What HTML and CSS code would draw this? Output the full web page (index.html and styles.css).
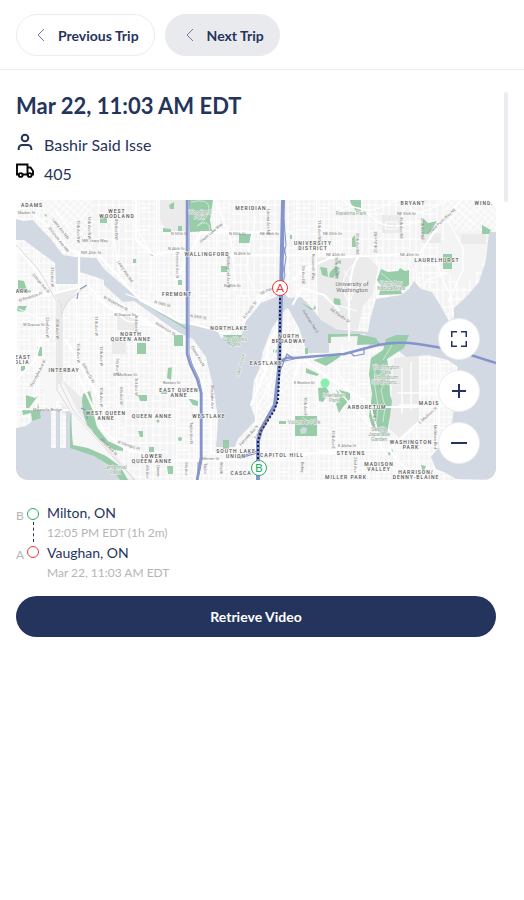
FILE: index.html
```html
<!DOCTYPE html>
<html lang="en">
<head>
<meta charset="utf-8">
<meta name="viewport" content="width=device-width, initial-scale=1">
<title>Trip details</title>
<link rel="stylesheet" href="styles.css">
</head>
<body>
<header class="trip-nav">
  <button class="pill" type="button">
    <svg class="chevron" viewBox="0 0 8 14" aria-hidden="true"><path d="M7 1 1 7l6 6"/></svg>
    <span>Previous Trip</span>
  </button>
  <button class="pill pill-filled" type="button">
    <svg class="chevron" viewBox="0 0 8 14" aria-hidden="true"><path d="M7 1 1 7l6 6"/></svg>
    <span>Next Trip</span>
  </button>
</header>
<div class="panel">
<main class="trip">
  <h1>Mar 22, 11:03 AM EDT</h1>
  <div class="facts">
    <div class="fact">
      <svg class="fact-icon" viewBox="0 0 18 18" fill="none" stroke="#25345d" stroke-width="2" aria-hidden="true"><circle cx="9" cy="5" r="3.300"/><path d="M2.700 17v-1.500a3.500 3.500 0 0 1 3.500-3.500h5.600a3.500 3.500 0 0 1 3.500 3.500V17"/></svg>
      <span>Bashir Said Isse</span>
    </div>
    <div class="fact">
      <svg class="fact-icon" viewBox="0 0 18 18" fill="none" stroke="#050505" stroke-width="1.900" aria-hidden="true"><path d="M3 12.500H1V2.500h10.500v10H6.500M11.500 5.500h3l2.500 3.500v3.500h-1"/><circle cx="4.700" cy="13" r="1.900"/><circle cx="13.700" cy="13" r="1.900"/></svg>
      <span>405</span>
    </div>
  </div>
  <section class="map" aria-label="Route map">
    <svg class="map-art" viewBox="0 0 480 280" preserveAspectRatio="xMidYMid slice">
      <defs>
        <pattern id="blocks" width="20" height="22" patternUnits="userSpaceOnUse"><path d="M3 0V22M8 0V22M13 0V22M18 0V22M0 4H20M0 12H20M0 19H20" stroke="#fff" stroke-width=".9"/><path d="M.5 0V22M0 8H13" stroke="#fff" stroke-width="1.300"/></pattern>
        <pattern id="wide" width="27" height="17" patternUnits="userSpaceOnUse"><path d="M2 0V17M9 0V17M16 0V17M22 0V17M0 5H27M0 14H16" stroke="#fff" stroke-width="1.100"/></pattern>
        <pattern id="slant" width="15" height="11" patternUnits="userSpaceOnUse" patternTransform="rotate(42)"><path d="M1 0V11M6 0V11M11 0V11M0 3H15M0 8H15" stroke="#fff"/></pattern>
      </defs>
      <rect width="480" height="280" fill="#f4f4f4"/>
      <rect width="480" height="280" fill="url(#blocks)"/>
      <path d="M215 0H275V95H215zM325 0H470V80L435 115L390 60H325zM75 0H122V95L64 52zM100 195H160V280H120z" fill="#f4f4f4"/>
      <path d="M215 0H275V95H215zM325 0H470V80L435 115L390 60H325zM75 0H122V95L64 52zM100 195H160V280H120z" fill="url(#wide)"/>
      <path d="M27 0H77V52L64 55L35 25zM248 140H276L273 185L245 230L240 195zM435 20H470V60L447 88L420 60zM422 0H480V31H440z" fill="#f4f4f4"/>
      <path d="M27 0H77V52L64 55L35 25zM248 140H276L273 185L245 230L240 195zM422 0H480V31H440z" fill="url(#slant)"/>

      <g fill="#ebebeb">
        <path d="M144 0H173V31H150l-6-12zM366 15H385V33H366zM320 57h32l10 10-5 27-10 12-5 24-30-2-10-10-1-60zM445 34h25v10h-25zM406 33h19v10h-19zM96 140h14v14H96zM101 115h20v15h-20zM403 155v65l-20 18-10-10 5-70zM36 95l10 14v105h24v-12L47 180v-70L63 88zM52 207l59 73h9L60 207z"/>
      </g>
      <path d="M42 128V200L54 211H62L46 180V128zM24 180l18-40v60l-10 8zM56 210V246L83 254 112 278 120 280 60 210z" fill="#f7f7f7"/>

      <g class="water">
        <path d="M0 19 7 21 17 20 24 28 34 38 47 55 59 57 80 58 88 69 110 88 122 98 160 123 188 126 202 132 205 138 225 137 230 121 245 103 260 97 265 91 273 98 285 97 294 106 305 120 320 129 352 132 354 120 360 99 385 95 393 89 398 81 405 89 416 92 424 105 433 121 438 118 438 108 451 96 463 82 470 60 473 32 480 32V280L440 279 430 273 420 269 415 257 423 247 435 233 438 207 437 180 442 167 432 160 412 155 390 157 377 146 350 147 320 153 291 153 287 140 283 128 272 108 267 112 256 128 247 151 243 170 238 180 235 207 240 220 222 239 219 247 200 247 202 220 198 190 190 157 177 139 160 131 118 101 107 102 88 85 88 80 77 76 63 72 62 84H40L39 63 20 49 8 40H0z"/>
        <path d="M0 228 10 226 20 218V210H35V248H40V211H44V248H50V211H56V246L83 255 101 268 111 280H0z"/>
      </g>
      <path d="M270 108 282 133 286 153H274L271 130 266 116zM313 134h36l4 11-6 15-34 2z" fill="#f5f5f5"/>
      <path d="M270 108 282 133 286 153H274L271 130 266 116zM320 145h25v15h-25z" fill="url(#wide)"/>
      <g fill="#99cda9">
        <path d="M173 0h24l-3 20 2 11-22 1zM84 17h7v6h-7zM223 34h12v9h-12zM205 66h6v6h-6zM153 5l5-3v7h-4zM147 28l8 1v3h-8zM117 59h3v4h-3zM134 54h4v2h-4zM162 26h4v5h-4zM162 80h4v5h-4zM274 35h2v4h-2z"/>
        <path d="m2 80 6 1 3 9 4 1v3H2zM2 106h9l-3 6-7-1zM28 14l3 1-1 2zM334 0h11v11h-5l-5-7zM407 18l5 5 9-2-8 13h-7zM466 25l9 5-2 4h-7zM427 54h9v15h-9zM365 69l7 3 10-1 2-3 5 3 4-1v15l-8 5 1 4-23 1 2-9-4-6zM336 38l3-3 1 12h-4z"/>
        <path d="m304 67 7 1 1 9-6-2zM314 72l5-5 5 1-7 10-4-1zM284 102l13 7 2-4 1 4-5 1zM320 72l4-1-3 9zM318 98l6 1 1 6-8 2zM119 98l41 25 11 7v-2l-50-31zM158 135h9v11h-9zM207 135h19l-1 7-8 5-8-6zM320 62l5-2v4zM312 134h32v2l-29 1v6h-3zM342 134l18 4 4 6-23 1zM121 143h9v11h-9zM21 147h5v9h-4zM5 166h4v5H5z"/>
        <path d="m66 200 1-6 7-3 2 8 1 13 4 15 6 8 5 6 15 7v3l-9-1-12-9-6-2-4-9-5-5-4-12zM54 212l3 33 15 3 18 8 14 10 8 14h-8l-11-15-15-9-24-8zM10 195l9 3 3-2-9 12 8 2 1-7 3 15-9 3-1-8-8 2-1-5 4-2z"/>
        <path d="m370 139 10-4h13l-5 13-17 11 2 10 1 26 2 6-2 15-3 18-14-3-4-15 3-22-3-20 2-16 12-8zM372 253l3-5 2 3-4 5zM279 216h22v20h-22zM297 160l27-7v4l-14 9zM290 168l13 6-2 2-11-3zM302 188l8-1 3 5-6 10-4-1zM320 189l14 4v6l-7 8-4 6-3-9 3-5zM263 221h7v3h-7zM289 148h3v6h-3zM207 240h6v9h-6zM172 198l10 3v5l-5-1zM405 265l5 1-3 7zM151 266h6v8h-5zM122 195h9v6h-7zM145 192h6v2h-6zM152 168l4-1-1 13-4-2zM122 231h5v6h-3zM133 247h5v5h-5z"/>
        <circle cx="164" cy="239" r="2"/><circle cx="142" cy="221" r="1.500"/><circle cx="259" cy="151" r="2"/>
      </g>
      <path d="m299 230 3-3 4 1-1 5-5 1z" transform="translate(-15 0)" fill="#d3d9e3"/>
      <g fill="none" stroke="#cde7d4"><path d="M175 2q18-4 18 6t-12 18q13-9 13 6M360 163q-3 17 0 30t1 25q-4 12 4 16M371 168v10l-6 12 4 17-2 15M376 145l-9 15M365 73l20 16M286 217l8 6 6-5"/></g>
      <g fill="none" stroke="#fff" stroke-linecap="round" stroke-linejoin="round">
        <path stroke-width="2.200" d="M0 46 26 78 43 105V130M14 12 33 27 54 50 62 53 80 52 124 100 160 120 200 130 208 134 225 129 233 110 250 94M63 53v33M0 93l36 1 35-9 21 22 68 27M120 0v40l18 15 28-5M160 80l25-48h90M171 55H320M278 80l9-10 27-12 90-5 18-27L445 0M345 55q-10 6-12 40v45M264 126l-12 18-1 23-16 38M277 104l9-16 22 7 15 15M240 218V280M0 209 54 210 115 276M62 175l26 57 25 18 20 5M50 140l40 70M0 180l19-20 6-20M160 198h35v55h125M285 160l-8 20v80M289 160l25 19 40 25 12 45M350 207h73v20M372 250l45-40M373 250l13 15 20 15M320 250h55M160 260h95l65-10"/>
        <path stroke-width="1.300" d="M40 12 54 28M80 12l34 6 18 30M95 18l8 55M135 55v36M110 94l37 14M73 93l38 28 49 10M105 104l50 32M327 0q20 17 43 5t25 2 35-7M321 13q20-13 35 4t52 2M432 20l15 28v22l-15 32M422 60q0 15 13 35l2 20M430 73l-19 7M386 168v45M395 162v48M404 158v50M413 158v50M425 162v45M403 182h34M382 193h55M383 205h52M320 170l44 70M320 188l40 45M235 2q8 18 0 35l-5 32 7 18M200 0l15 40 5 50M171 150l24 51M250 155q-5 15 3 30l-12 24M260 143l-8 55M271 143l-14 67"/>
        <path stroke-width="1" d="M337 65q-18 16-3 40M328 71q13 13 7 29M350 81l-15 12M320 105l21 6M370 22h11v7h-11zM445 3l12 11 8-8M437 6l20 18M6 120l30 10M3 109l39 18M58 115h40M70 94v100M88 97v90"/>
      </g>
      <path d="M0 45 22 69 41 102V190l12 19 65 71M43 100v84M45 103v83l12 24 62 70M69 87 51 102 45 115" fill="none" stroke="#dadada"/>
      <g fill="none" stroke="#8595cb" stroke-linejoin="round">
        <path stroke-width="2.500" d="M171 0V154L174 164 181 179 185 193V257L181 280"/>
        <path stroke-width="1" d="M173 0V154L176 164 183 179 186 193V260L182 280M182 262v12"/>
        <path stroke-width="4" d="M267 0 265 94 263 170 259 205 245 230 242 241V280"/>
        <path stroke-width="1" d="M268 20l2 25-4 17 3 13-4 15M268 47l2 10-2 15"/>
        <path stroke-width="2.500" d="M264 163q5-7 14-5l50-4 34-9q20-4 40-1l37 6 41 13"/>
        <path stroke-width="1.200" d="m264 171 7-17 7 5-14 3m76-11 8-3v6l-10 2-4-4zM221 258l20-7M224 258l17-5M62 93l-1 6M64 89l7-4M65 208l6 3v8"/>
      </g>
      <path class="route" d="M264 94V155L262 200 258 211 245 231 242 241V262"/>

      <g class="road-names">
        <text x="2" y="14">Market St</text><text x="66" y="42">NW Leary Way</text><text x="65" y="54">NW 45th St</text><text x="213" y="35">N 50th St</text><text x="244" y="35">NE 50th St</text><text x="218" y="55">N 45th St</text><text x="208" y="87">N 40th St</text><text x="307" y="35">NE 50th St</text><text x="310" y="56">NE 45th St</text><text x="381" y="15">NE 55th St</text><text x="384" y="56">NE 45th St</text><text x="97" y="176">W McGraw St</text><text x="98" y="116">W Dravus St</text><text x="7" y="126">W Dravus St</text><text x="17" y="211">Magnolia Bridge</text><text x="147" y="184">Boston St</text><text x="278" y="184">E Boston St</text><text x="322" y="247">E Aloha St</text><text x="186" y="260">Mercer St</text><text x="152" y="50">N 46th St</text><text x="155" y="35">N 50th St</text>
        <text transform="translate(36 20) rotate(52)">Leary Ave NW</text><text transform="translate(32 28) rotate(52)">Shilshole Ave NW</text><text transform="translate(16 75) rotate(49)">Gilman Ave W</text><text transform="translate(35 67) rotate(90)">31st Ave W</text><text transform="translate(61 20) rotate(90)">15th Ave NW</text><text transform="translate(72 16) rotate(90)">14th Ave NW</text><text transform="translate(99 19) rotate(90)">8th Ave NW</text><text transform="translate(101 62) rotate(56)">Leary Way NW</text><text transform="translate(87 98) rotate(28)">W Nickerson St</text><text transform="translate(138 103) rotate(15)">N 36th St</text><text transform="translate(139 124) rotate(31)">Nickerson St</text><text transform="translate(30 117) rotate(90)">22nd Ave W</text><text transform="translate(40 119) rotate(90)">20th Ave W</text><text transform="translate(79 116) rotate(90)">11th Ave W</text><text transform="translate(119 115) rotate(90)">3rd Ave W</text><text transform="translate(3 102) rotate(-18)">W Emerson Pl</text><text transform="translate(185 43) rotate(-40)">Green Lake Way</text><text transform="translate(160 52) rotate(90)">Fremont Ave N</text><text transform="translate(251 9) rotate(90)">Latona Ave NE</text><text transform="translate(211 56) rotate(90)">Wallingford Ave N</text><text transform="translate(302 20) rotate(90)">11th Ave NE</text><text transform="translate(319 57) rotate(90)">15th Ave NE</text><text transform="translate(286 65) rotate(90)">7th Ave NE</text><text transform="translate(296 54) rotate(90)">Roosevelt Way</text><text transform="translate(245 95) rotate(-25)">NE Pacific St</text><text transform="translate(314 110) rotate(35)">NE Pacific St</text><text transform="translate(229 119) rotate(-54)">N Pacific St</text><text transform="translate(174 117) rotate(9)">N 35th St</text><text transform="translate(286 111) rotate(57)">Fuhrman Ave E</text><text transform="translate(340 33) rotate(90)">20th Ave NE</text><text transform="translate(361 53) rotate(-90)">25th Ave NE</text><text transform="translate(384 17) rotate(90)">35th Ave NE</text><text transform="translate(405 18) rotate(90)">40th Ave NE</text><text transform="translate(415 33) rotate(-43)">Sand Point Way NE</text>
        <text transform="translate(61 143) rotate(90)">15th Ave W</text><text transform="translate(84 146) rotate(90)">12th Ave W</text><text transform="translate(66 164) rotate(62)">Gilman Dr W</text><text transform="translate(16 188) rotate(-63)">Thorndyke Ave W</text><text transform="translate(84 187) rotate(90)">10th Ave W</text><text transform="translate(100 158) rotate(90)">7th Ave W</text><text transform="translate(119 178) rotate(90)">3rd Ave W</text><text transform="translate(104 187) rotate(90)">6th Ave W</text><text transform="translate(84 240) rotate(45)">Elliott Ave W</text><text transform="translate(101 243) rotate(18)">W Olympic Pl</text><text transform="translate(130 265) rotate(90)">4th Ave</text><text transform="translate(141 265) rotate(90)">Queen</text><text transform="translate(175 147) rotate(60)">Dexter Ave N</text><text transform="translate(195 185) rotate(90)">Westlake Ave</text><text transform="translate(174 222) rotate(90)">Taylor Ave N</text><text transform="translate(169 262) rotate(90)">5th Ave</text><text transform="translate(188 263) rotate(90)">Taylor</text><text transform="translate(204 262) rotate(90)">Westlk</text><text transform="translate(225 246) rotate(-48)">Fairview Ave N</text><text transform="translate(240 239) rotate(-58)">Eastlake Ave E</text><text transform="translate(288 197) rotate(90)">10th Ave E</text><text transform="translate(285 262) rotate(90)">Brdwy</text><text transform="translate(316 230) rotate(90)">15th Ave E</text><text transform="translate(357 210) rotate(90)">24th Ave E</text><text transform="translate(338 257) rotate(90)">23rd Ave</text><text transform="translate(404 224) rotate(-42)">E Madison St</text><text transform="translate(418 225) rotate(90)">McGilvra Blvd</text>
      </g>
      <g class="places">
        <text x="16" y="7">ADAMS</text><text x="101" y="13">WEST</text><text x="101" y="18">WOODLAND</text><text x="235" y="10">MERIDIAN</text><text x="191" y="56">WALLINGFORD</text><text x="297" y="45">UNIVERSITY</text><text x="297" y="50">DISTRICT</text><text x="397" y="5">BRYANT</text><text x="468" y="5">WIND.</text><text x="421" y="62">LAURELHURST</text><text x="161" y="96">FREMONT</text><text x="213" y="130">NORTHLAKE</text><text x="273" y="138">NORTH</text><text x="273" y="143">BROADWAY</text><text x="115" y="136">NORTH</text><text x="115" y="141">QUEEN ANNE</text><text x="7" y="159">EAST</text><text x="6" y="164">OLIA</text><text x="48" y="172">INTERBAY</text><text x="90" y="215">WEST QUEEN</text><text x="90" y="220">ANNE</text><text x="136" y="218">QUEEN ANNE</text><text x="163" y="192">EAST QUEEN</text><text x="163" y="197">ANNE</text><text x="193" y="218">WESTLAKE</text><text x="136" y="258">LOWER</text><text x="136" y="263">QUEEN ANNE</text><text x="250" y="165">EASTLAKE</text><text x="220" y="253">SOUTH LAKE</text><text x="220" y="258">UNION</text><text x="266" y="257">CAPITOL HILL</text><text x="225" y="275">CASCA</text><text x="351" y="209">ARBORETUM</text><text x="413" y="205">MADIS</text><text x="335" y="255">STEVENS</text><text x="395" y="244">WASHINGTON</text><text x="395" y="249">PARK</text><text x="363" y="266">MADISON</text><text x="363" y="271">VALLEY</text><text x="330" y="279">MILLER PARK</text><text x="400" y="274">HARRISON/</text><text x="400" y="279">DENNY-BLAINE</text><text x="6" y="93">ARK</text>
      </g>
      <g class="parks"><text x="184" y="14">Woodland</text><text x="183" y="19">Park</text><text x="335" y="15">Ravenna Park</text><text x="375" y="85">Union Bay</text><text x="375" y="90">Natural Area</text><text x="370" y="169">Washington</text><text x="370" y="174">Park</text><text x="370" y="179">Arboretum</text><text x="370" y="184">UW Botanic…</text><text x="363" y="231">Seattle</text><text x="363" y="236">Japanese</text><text x="363" y="241">Garden</text><text x="99" y="269">Centennial</text><text x="99" y="274">Park</text><text x="288" y="224">Volunteer Park</text><text x="318" y="197">Interlaken</text><text x="318" y="202">Park</text><text x="219" y="141">Gas Works</text><text x="219" y="146">Park</text><text transform="translate(226 166) rotate(-75)">Lake Union</text></g>
      <g class="campus"><text x="336" y="86">University of</text><text x="336" y="92">Washington</text></g>
      <circle cx="309" cy="183" r="4.500" fill="#88f0ae"/>
      <g class="stop stop-start"><circle cx="264" cy="88" r="7.500"/><text x="264" y="92">A</text></g>
      <g class="stop stop-end"><circle cx="243" cy="268" r="7.500"/><text x="243" y="272">B</text></g>
    </svg>
    <div class="map-controls">
      <button type="button" aria-label="Full screen"><svg viewBox="0 0 18 18" aria-hidden="true"><path stroke-width="1.500" d="M1.750 7V1.750H7M11 1.750h5.250V7M16.250 11v5.250H11M7 16.250H1.750V11"/></svg></button>
      <button type="button" aria-label="Zoom in"><svg viewBox="0 0 18 18" aria-hidden="true"><path stroke-width="2" d="M9 2v14M2 9h14"/></svg></button>
      <button type="button" aria-label="Zoom out"><svg viewBox="0 0 18 18" aria-hidden="true"><path stroke-width="2" d="M1 9h16"/></svg></button>
    </div>
  </section>
  <ol class="stops">
    <li class="end">
      <span class="letter">B</span><span class="track"><i class="dot"></i><i class="link"></i></span>
      <div><p class="city">Milton, ON</p><p class="time">12:05 PM EDT (1h 2m)</p></div>
    </li>
    <li class="start">
      <span class="letter">A</span><span class="track"><i class="dot"></i></span>
      <div><p class="city">Vaughan, ON</p><p class="time">Mar 22, 11:03 AM EDT</p></div>
    </li>
  </ol>
  <button class="retrieve" type="button">Retrieve Video</button>
</main>
<div class="scroll-thumb"></div>
</div>
</body>
</html>
```
FILE: styles.css
```css
* { box-sizing: border-box; }
body {
  margin: 0;
  background: #fff;
  color: #25345d;
  font-family: Lato, "Liberation Sans", sans-serif;
}
h1, p, ol { margin: 0; padding: 0; }
button { font: inherit; color: inherit; cursor: pointer; }

.trip-nav {
  display: flex;
  gap: 10px;
  padding: 14px 16px 13px;
  border-bottom: 1px solid #ebecef;
}
.pill {
  display: flex;
  align-items: center;
  gap: 13px;
  height: 42px;
  padding: 0 15px 0 20px;
  border: 1px solid #ebecef;
  border-radius: 21px;
  background: #fff;
  font-size: 14px;
  font-weight: 700;
}
.pill-filled { background: #e9eaee; border-color: #e9eaee; }
.chevron { width: 8px; height: 14px; fill: none; stroke: #7078a0; stroke-width: 1; }

.panel { display: flex; gap: 8px; padding: 22px 16px 0; }
.trip { flex: 1; min-width: 0; }
.scroll-thumb { width: 4px; height: 110px; border-radius: 2px; background: #ebecef; }
h1 { font-size: 22px; line-height: 28px; font-weight: 700; }
.facts { display: grid; gap: 5px; padding: 13px 0 14px; }
.fact { display: flex; gap: 10px; font-size: 16px; line-height: 24px; }
.fact-icon { width: 18px; height: 18px; }

.map { position: relative; overflow: hidden; border-radius: 12px; }
.map-art { display: block; width: 100%; font-family: Roboto, sans-serif; }
.water { fill: #d3d9e3; }
.route { fill: none; stroke: #17234c; stroke-width: 2; stroke-dasharray: 2 2; }
.road-names { font-size: 4px; fill: #808080; }
.places { font-size: 5px; font-weight: 500; letter-spacing: 1px; text-anchor: middle; fill: #555; stroke: #f8f8f8; stroke-width: 1; paint-order: stroke; }
.parks { font-size: 5px; text-anchor: middle; fill: #a0aaa5; stroke: #eef5f0; stroke-width: 1; paint-order: stroke; }
.campus { font-size: 6px; text-anchor: middle; fill: #777; }
.stop { font-family: Lato, sans-serif; font-size: 12px; text-anchor: middle; }
.stop circle { fill: #fff; stroke-width: 1; }
.stop-start circle { stroke: #e53935; }
.stop-start text { fill: #e53935; }
.stop-end circle { stroke: #27ae60; }
.stop-end text { fill: #27ae60; }
.map-controls {
  position: absolute;
  right: 16px;
  bottom: 16px;
  display: flex;
  flex-direction: column;
  gap: 10px;
}
.map-controls button {
  display: grid;
  place-items: center;
  width: 42px;
  height: 42px;
  padding: 0;
  border: 1px solid #ebecef;
  border-radius: 50%;
  background: #fff;
}
.map-controls svg { width: 18px; height: 18px; fill: none; stroke: #25345d; }

.stops { list-style: none; padding: 22px 0 14px; }
.stops li { display: grid; grid-template-columns: 11px 12px 1fr; }
.stops div { padding-left: 8px; }
.letter { padding-top: 5px; font-size: 12px; line-height: 18px; color: #b5b5b5; }
.track { display: flex; flex-direction: column; align-items: center; padding-top: 6px; }
.dot { width: 12px; height: 12px; flex: none; border: 1px solid #27ae60; border-radius: 50%; }
.start .dot { border-color: #e53935; }
.start .track, .start .letter { padding-top: 4px; }
.link { flex: 1; margin-top: 2px; border-left: 1px dashed #25345d; }
.city { font-size: 14px; line-height: 22px; }
.time { font-size: 12px; line-height: 18px; color: #b5b5b5; }
.retrieve {
  display: block;
  width: 100%;
  height: 41px;
  padding: 0;
  border: 0;
  border-radius: 21px;
  background: #25345d;
  color: #fff;
  font-size: 14px;
  font-weight: 700;
}
```
